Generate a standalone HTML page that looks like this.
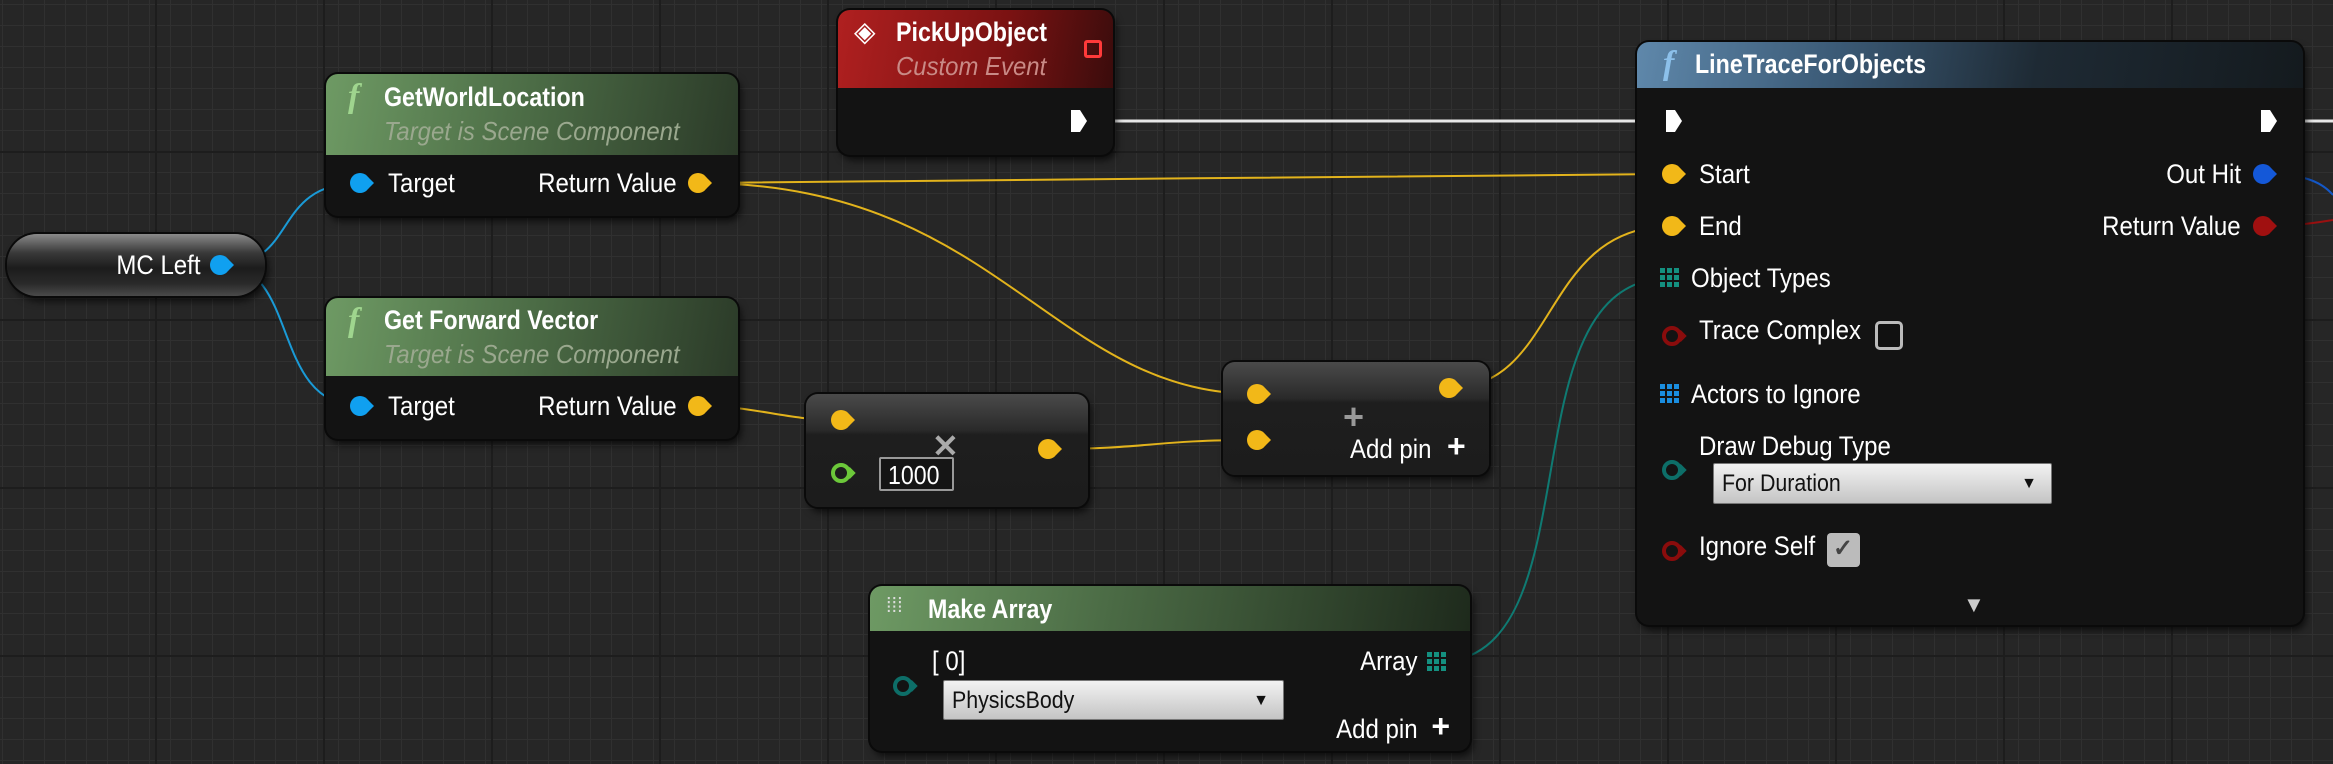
<!DOCTYPE html>
<html><head><meta charset="utf-8"><style>
*{margin:0;padding:0;box-sizing:border-box}
body{width:2333px;height:764px;overflow:hidden;position:relative;
background-color:#262626;
background-image:
linear-gradient(to right,#1d1d1d 0,#1d1d1d 2px,transparent 2px),
linear-gradient(to bottom,#1d1d1d 0,#1d1d1d 2px,transparent 2px),
linear-gradient(to right,#303030 0,#303030 1px,transparent 1px),
linear-gradient(to bottom,#303030 0,#303030 1px,transparent 1px);
background-size:168px 168px,168px 168px,21px 21px,21px 21px;
background-position:155px 151px,155px 151px,2px 4px,2px 4px;
font-family:"Liberation Sans Narrow","Liberation Sans",sans-serif;color:#fff}
.n{position:absolute;background:#131313;border-radius:12px;box-shadow:0 0 0 2px #0a0a0a,3px 5px 8px rgba(0,0,0,.7);overflow:hidden}
.hd{position:absolute;left:0;right:0;top:0}
.t{position:absolute;white-space:nowrap;font-size:27px;line-height:1;transform:scaleX(.89);transform-origin:left center}
.r{transform-origin:right center}
.b{font-weight:bold;font-size:27px;transform:scaleX(.86)}
.i{font-style:italic;color:#9aa88e;font-size:26px;transform:scaleX(.92)}
svg{position:absolute;left:0;top:0}
.dd{position:absolute;background:linear-gradient(#f2f2f2,#c4c4c4);border:1px solid #777;border-radius:2px;color:#111}
.fi{color:#9fd58e;font-style:italic;font-family:'Liberation Serif',serif;font-size:34px;font-weight:bold;transform:none}
</style></head><body>
<svg width="2333" height="764" fill="none">
<path d="M1113 121H1640M2303 121H2333" stroke="#e6e6e6" stroke-width="3"/>
<path d="M698 183C900 183 1450 174 1672 174" stroke="#e2b31c" stroke-width="2"/>
<path d="M698 183C1000 183 1050 394 1257 394" stroke="#e2b31c" stroke-width="2"/>
<path d="M698 406C760 406 780 420 841 420" stroke="#e2b31c" stroke-width="2"/>
<path d="M1048 449C1150 449 1150 440 1257 440" stroke="#e2b31c" stroke-width="2"/>
<path d="M1449 388C1560 388 1540 226 1672 226" stroke="#e2b31c" stroke-width="2"/>
<path d="M222 265C300 265 270 183 360 183M222 265C300 265 270 406 360 406" stroke="#1a9ad6" stroke-width="2"/>
<path d="M1437 662C1600 662 1500 278 1670 278" stroke="#0f7a72" stroke-width="2"/>
<path d="M2265 174C2300 174 2320 180 2333 195" stroke="#1458c8" stroke-width="2"/>
<path d="M2265 226C2300 226 2320 222 2333 220" stroke="#9a1010" stroke-width="2"/>
</svg>

<!-- MC Left -->
<div class="n" style="left:7px;top:234px;width:258px;height:62px;border-radius:30px;background:linear-gradient(#8a8a8a 0%,#3a3a3a 30%,#1c1c1c 55%,#2a2a2a 80%,#4a4a4a 100%)"><div class="t r" style="right:64px;top:18px">MC Left</div></div>

<!-- GetWorldLocation -->
<div class="n" style="left:326px;top:74px;width:412px;height:142px">
<div class="hd" style="height:81px;background:linear-gradient(100deg,#6e9a64,#4b6b45 50%,#2b3a28)"></div>
<div class="t fi" style="left:22px;top:6px">f</div>
<div class="t b" style="left:58px;top:10px">GetWorldLocation</div>
<div class="t i" style="left:58px;top:44px">Target is Scene Component</div>
<div class="t" style="left:62px;top:96px">Target</div>
<div class="t r" style="right:61px;top:96px">Return Value</div>
</div>
<!-- Get Forward Vector -->
<div class="n" style="left:326px;top:298px;width:412px;height:141px">
<div class="hd" style="height:78px;background:linear-gradient(100deg,#6e9a64,#4b6b45 50%,#2b3a28)"></div>
<div class="t fi" style="left:22px;top:6px">f</div>
<div class="t b" style="left:58px;top:9px">Get Forward Vector</div>
<div class="t i" style="left:58px;top:43px">Target is Scene Component</div>
<div class="t" style="left:62px;top:95px">Target</div>
<div class="t r" style="right:61px;top:95px">Return Value</div>
</div>

<!-- PickUpObject -->
<div class="n" style="left:838px;top:10px;width:275px;height:145px">
<div class="hd" style="height:78px;background:linear-gradient(100deg,#b02020,#7a1212 60%,#3a0c0c)"></div>
<div class="t" style="left:16px;top:8px;font-size:28px;transform:none">◈</div>
<div class="t b" style="left:58px;top:9px">PickUpObject</div>
<div class="t i" style="left:58px;top:43px;color:#c98a86">Custom Event</div>
<div style="position:absolute;left:246px;top:30px;width:18px;height:18px;border:3px solid #ff3a3a;border-radius:3px"></div>
</div>

<!-- Multiply -->
<div class="n" style="left:806px;top:394px;width:282px;height:113px;background:linear-gradient(#4a4a4a,#2a2a2a 32%,#1e1e1e 36%,#1c1c1c)"></div>
<div class="t" style="left:932px;top:430px;color:#aaa;font-size:32px;font-weight:bold;transform:none">✕</div>
<div style="position:absolute;left:879px;top:457px;width:75px;height:34px;border:2px solid #999;border-radius:2px;background:#151515"><div class="t" style="left:7px;top:3px;font-size:26px">1000</div></div>

<!-- Add -->
<div class="n" style="left:1223px;top:362px;width:266px;height:113px;background:linear-gradient(#4a4a4a,#2a2a2a 32%,#1e1e1e 36%,#1c1c1c)"></div>
<div class="t" style="left:1343px;top:399px;color:#999;font-size:36px;font-weight:bold;transform:none">+</div>
<div class="t" style="left:1350px;top:436px">Add pin</div>
<div class="t" style="left:1447px;top:430px;font-size:32px;font-weight:bold;transform:none">+</div>

<!-- Make Array -->
<div class="n" style="left:870px;top:586px;width:600px;height:165px">
<div class="hd" style="height:45px;background:linear-gradient(100deg,#6e9a64,#4b6b45 40%,#1e2a1c)"></div>
<div class="t" style="left:16px;top:10px;font-size:20px;color:#ddd;transform:none">⁞⁞⁞</div>
<div class="t b" style="left:58px;top:10px">Make Array</div>
<div class="t" style="left:62px;top:62px">[ 0]</div>
<div class="t r" style="right:52px;top:62px">Array</div>
<div class="t r" style="right:52px;top:130px">Add pin</div>
<div class="t" style="right:20px;top:124px;font-size:32px;font-weight:bold;transform:none">+</div>
</div>
<div class="dd" style="left:943px;top:680px;width:341px;height:40px"><div class="t" style="left:8px;top:8px;color:#111;font-size:24px">PhysicsBody</div><div class="t" style="right:14px;top:12px;color:#111;font-size:16px;transform:none">▼</div></div>

<!-- LineTrace -->
<div class="n" style="left:1637px;top:42px;width:666px;height:583px">
<div class="hd" style="height:46px;background:linear-gradient(100deg,#5f88ab,#3b5a76 30%,#1e2a34 60%,#141a1e)"></div>
<div class="t fi" style="left:26px;top:5px;color:#8cc0ea">f</div>
<div class="t b" style="left:58px;top:9px">LineTraceForObjects</div>
<div class="t" style="left:62px;top:119px">Start</div>
<div class="t r" style="right:62px;top:119px">Out Hit</div>
<div class="t" style="left:62px;top:171px">End</div>
<div class="t r" style="right:62px;top:171px">Return Value</div>
<div class="t" style="left:54px;top:223px">Object Types</div>
<div class="t" style="left:62px;top:275px">Trace Complex</div>
<div style="position:absolute;left:238px;top:279px;width:28px;height:29px;border:3px solid #bbb;border-radius:5px;background:#111"></div>
<div class="t" style="left:54px;top:339px">Actors to Ignore</div>
<div class="t" style="left:62px;top:391px">Draw Debug Type</div>
<div class="t" style="left:62px;top:491px">Ignore Self</div>
<div style="position:absolute;left:190px;top:491px;width:33px;height:34px;border-radius:4px;background:#bbb"><div class="t" style="left:6px;top:4px;color:#444;font-size:24px;font-weight:bold;transform:none">✓</div></div>
<div class="t" style="left:326px;top:552px;color:#ccc;font-size:22px;transform:none">▼</div>
</div>
<div class="dd" style="left:1713px;top:463px;width:339px;height:41px"><div class="t" style="left:8px;top:8px;color:#111;font-size:24px">For Duration</div><div class="t" style="right:14px;top:12px;color:#111;font-size:16px;transform:none">▼</div></div>

<!-- pins -->
<svg width="2333" height="764">
<defs>
<g id="dp"><circle r="10"/><path d="M8 -6L14 0L8 6Z"/></g>
<g id="rp"><circle r="8" fill="none" stroke-width="4"/><path d="M9 -5L14 0L9 5Z"/></g>
<g id="ex"><path d="M-7 -11H2L9 0L2 11H-7Z" fill="#fff"/></g>
<g id="gr"><rect x="-10" y="-10" width="5" height="5"/><rect x="-3" y="-10" width="5" height="5"/><rect x="4" y="-10" width="5" height="5"/><rect x="-10" y="-3" width="5" height="5"/><rect x="-3" y="-3" width="5" height="5"/><rect x="4" y="-3" width="5" height="5"/><rect x="-10" y="4" width="5" height="5"/><rect x="-3" y="4" width="5" height="5"/><rect x="4" y="4" width="5" height="5"/></g>
</defs>
<use href="#dp" x="220" y="265" fill="#10a0f0"/>
<use href="#dp" x="360" y="183" fill="#10a0f0"/>
<use href="#dp" x="360" y="406" fill="#10a0f0"/>
<use href="#dp" x="698" y="183" fill="#f2b818"/>
<use href="#dp" x="698" y="406" fill="#f2b818"/>
<use href="#ex" x="1078" y="121"/>
<use href="#dp" x="841" y="420" fill="#f2b818"/>
<use href="#rp" x="841" y="473" stroke="#6cc83a" fill="#6cc83a"/>
<use href="#dp" x="1048" y="449" fill="#f2b818"/>
<use href="#dp" x="1257" y="394" fill="#f2b818"/>
<use href="#dp" x="1257" y="440" fill="#f2b818"/>
<use href="#dp" x="1449" y="388" fill="#f2b818"/>
<use href="#rp" x="903" y="686" stroke="#0d6e68" fill="#0d6e68"/>
<use href="#gr" x="1437" y="662" fill="#149080"/>
<use href="#ex" x="1673" y="121"/>
<use href="#ex" x="2268" y="121"/>
<use href="#dp" x="1672" y="174" fill="#f2b818"/>
<use href="#dp" x="1672" y="226" fill="#f2b818"/>
<use href="#dp" x="2263" y="174" fill="#1458d8"/>
<use href="#dp" x="2263" y="226" fill="#a01010"/>
<use href="#gr" x="1670" y="278" fill="#149080"/>
<use href="#rp" x="1672" y="336" stroke="#8a0c0c" fill="#8a0c0c"/>
<use href="#gr" x="1670" y="394" fill="#1a8ee0"/>
<use href="#rp" x="1672" y="470" stroke="#0d6e68" fill="#0d6e68"/>
<use href="#rp" x="1672" y="551" stroke="#8a0c0c" fill="#8a0c0c"/>
</svg>
</body></html>
